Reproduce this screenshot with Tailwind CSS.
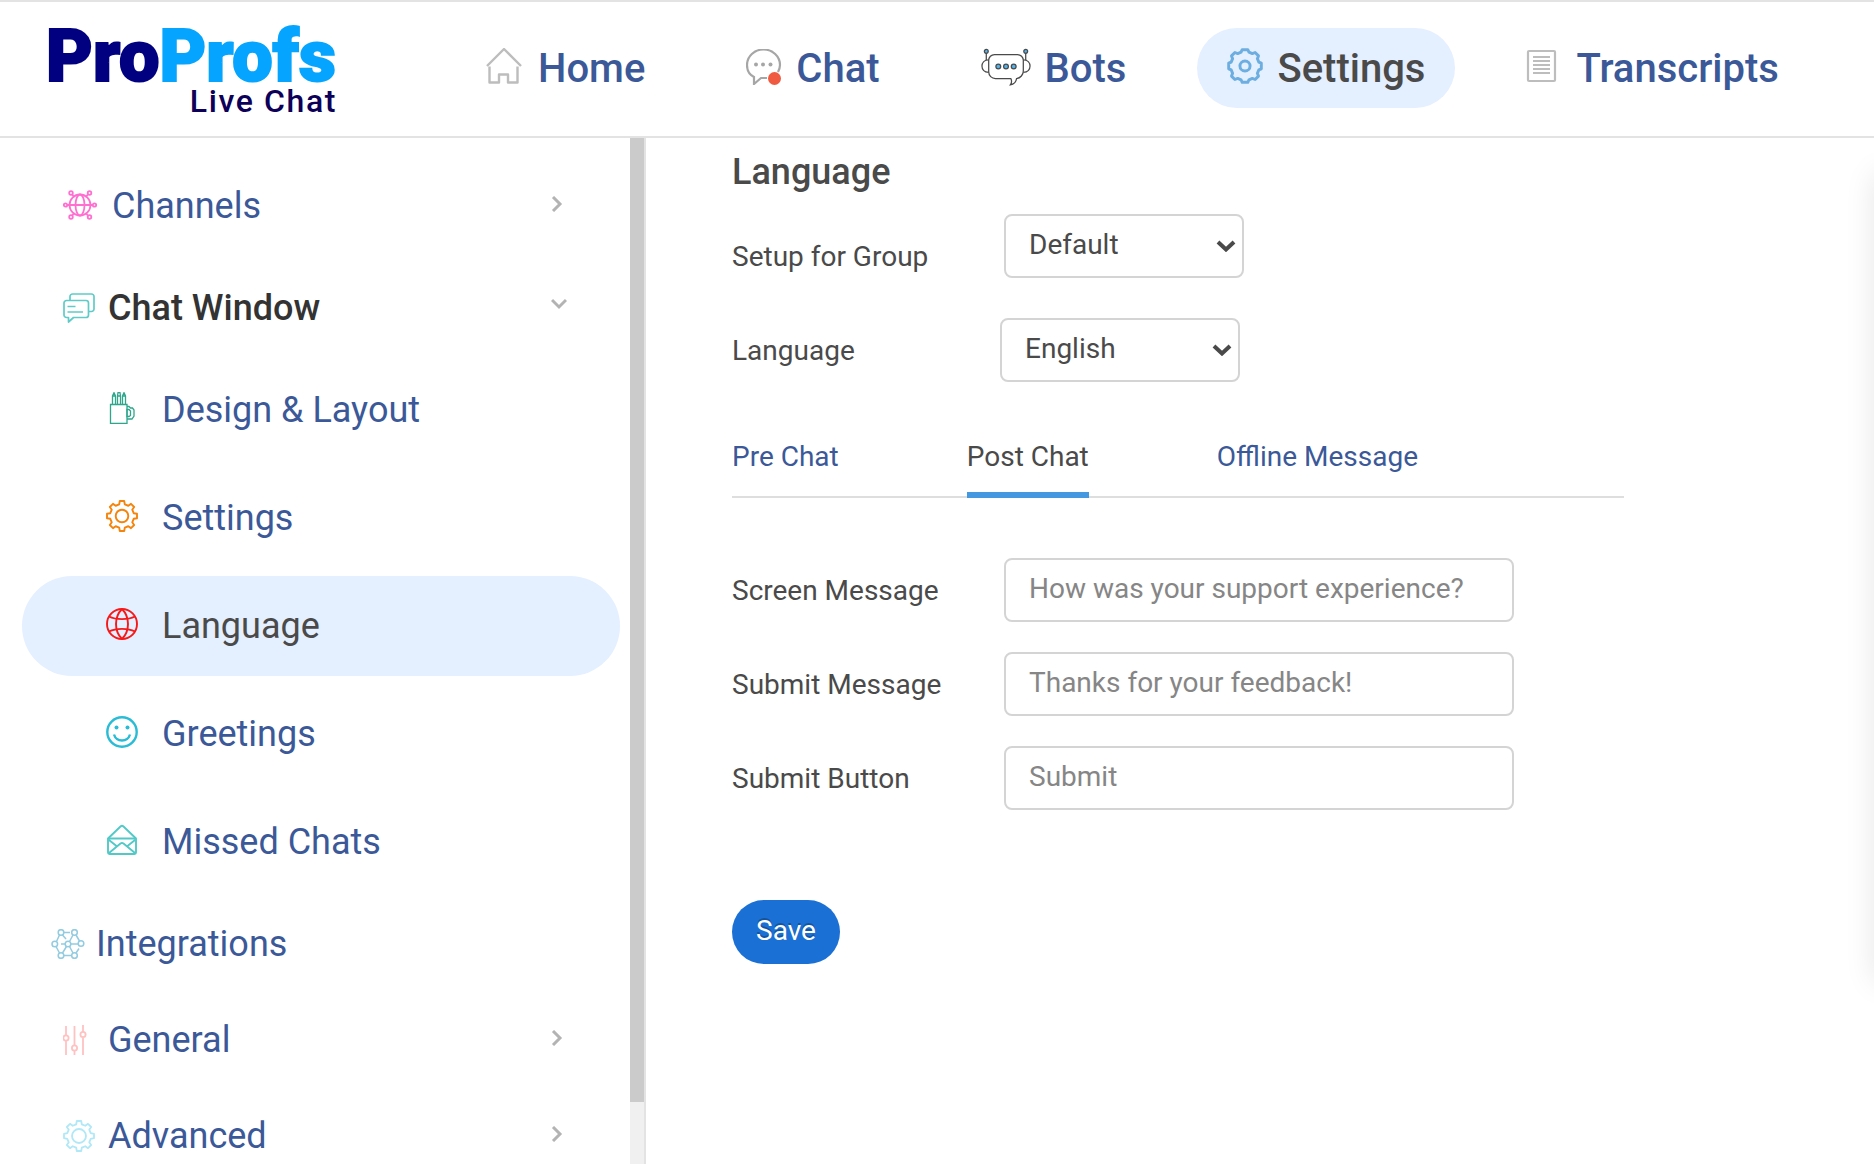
<!DOCTYPE html>
<html lang="en">
<head>
    <meta charset="UTF-8">
    <meta name="viewport" content="width=device-width, initial-scale=1.0">
    <title>ProProfs Live Chat - Language Settings</title>
    <script src="https://cdn.jsdelivr.net/npm/@tailwindcss/browser@4"></script>
</head>
<body class="h-screen flex flex-col overflow-hidden bg-white text-[#4a4a4a] font-['Roboto',sans-serif]">

    <!-- Shared icon shapes -->
    <svg class="hidden">
        <symbol id="gear" viewBox="0 0 32 32">
            <path d="M13.8 1H18.2L18.8 4.3L22.3 5.75L25 3.85L28.15 7L26.25 9.7L27.7 13.2L31 13.8V18.2L27.7 18.8L26.25 22.3L28.15 25L25 28.15L22.3 26.25L18.8 27.7L18.2 31H13.8L13.2 27.7L9.7 26.25L7 28.15L3.85 25L5.75 22.3L4.3 18.8L1 18.2V13.8L4.3 13.2L5.75 9.7L3.85 7L7 3.85L9.7 5.75L13.2 4.3Z" stroke-linejoin="round"/>
        </symbol>
        <symbol id="chevron-right" viewBox="0 0 16 16">
            <path d="M4 1L11 8L4 15"/>
        </symbol>
    </svg>

    <!-- Header -->
    <header class="shrink-0 h-[138px] flex items-start border-y-2 border-[#e3e3e3] pl-[46px]">
        <a href="#" class="mt-6 w-[294px] shrink-0 flex flex-col">
            <span class="font-black text-[72px] leading-[62px] text-[#000080] [-webkit-text-stroke-width:2px]">Pro<span class="text-[#05a5ff]">Profs</span></span>
            <span class="self-end pr-[3px] text-[32px] leading-[26px] font-medium tracking-wider text-[#0d0058]">Live Chat</span>
        </a>
        <nav class="ml-[116px] mt-[26px] flex gap-[41px] text-[40px] leading-[60px] font-medium text-[#3b5998]">
            <a href="#" class="flex items-center gap-4 h-20 px-[30px] pt-[2px] rounded-full">
                <svg class="w-9 h-9 mb-[6px]" viewBox="0 0 36 36" fill="none" stroke="#bdbdbd" stroke-width="2.400" stroke-linejoin="round">
                    <path d="M1 18L18 1L35 18"/>
                    <path d="M3.500 18.500V34.500H13V26.500H22V34.500H31.500V18.500"/>
                </svg>
                Home
            </a>
            <a href="#" class="flex items-center gap-[14px] h-20 px-[30px] pt-[2px] rounded-full">
                <svg class="w-9 h-9 mb-1" viewBox="0 0 36 36" fill="none">
                    <path d="M21 29H15L8 35V28C4 26 1 21.500 1 16A16.500 15.500 0 0 1 34 16C34 19 33 21 32 23" stroke="#a6a6a6" stroke-width="2.200"/>
                    <g fill="#a6a6a6">
                        <circle cx="10" cy="15.500" r="2"/>
                        <circle cx="17" cy="15.500" r="2"/>
                        <circle cx="24.500" cy="15.500" r="2"/>
                    </g>
                    <circle cx="28.500" cy="29.500" r="6.500" fill="#f05a40"/>
                </svg>
                Chat
            </a>
            <a href="#" class="flex items-center gap-[14px] h-20 px-[30px] pt-[2px] rounded-full">
                <svg class="w-[50px] h-[38px] mb-1" viewBox="0 0 52 38" fill="none" stroke="#4a4a4a" stroke-width="1.300">
                    <path d="M14 6H38A6 6 0 0 1 44 12V23A8 8 0 0 1 37 31C36.500 34 34 37 30.500 37.500C32 35.500 32 33 31 31H15A7 7 0 0 1 8 24V12A6 6 0 0 1 14 6Z"/>
                    <path d="M8 11.500C3 11.500 1 15 1 18S3 24.500 8 24.500"/>
                    <path d="M44 11.500C49 11.500 51 15 51 18S49 24.500 44 24.500"/>
                    <path d="M5.500 12V4M46.500 12V4"/>
                    <g fill="#53b4ee">
                        <circle cx="5.500" cy="2.700" r="2"/>
                        <circle cx="46.500" cy="2.700" r="2"/>
                        <circle cx="18" cy="18.500" r="2.500"/>
                        <circle cx="26" cy="18.500" r="2.500"/>
                        <circle cx="34" cy="18.500" r="2.500"/>
                    </g>
                </svg>
                Bots
            </a>
            <a href="#" class="flex items-center gap-[14px] h-20 px-[30px] pt-[2px] rounded-full bg-[#e4efff] text-[#4a4a4a]" aria-current="page">
                <svg class="w-9 h-9 mb-[6px]" viewBox="0 0 32 32" fill="none" stroke="#6caee0" stroke-width="2.600">
                    <path d="M13.500 1.500H18.500L19.500 3.700L22.500 5L25 4L28 7L27 9.500L28.300 12.500L30.500 13.500V18.500L28.300 19.500L27 22.500L28 25L25 28L22.500 27L19.500 28.300L18.500 30.500H13.500L12.500 28.300L9.500 27L7 28L4 25L5 22.500L3.700 19.500L1.500 18.500V13.500L3.700 12.500L5 9.500L4 7L7 4L9.500 5L12.500 3.700Z" stroke-linejoin="round"/>
                    <circle cx="16" cy="16" r="4.500"/>
                </svg>
                Settings
            </a>
            <a href="#" class="flex items-center gap-[14px] h-20 px-[30px] pt-[2px] rounded-full">
                <svg class="w-9 h-9 mb-[6px]" viewBox="0 0 36 36" fill="none" stroke="#bdbdbd" stroke-width="2.200">
                    <rect x="2" y="3" width="27" height="30" rx="1"/>
                    <path d="M7 9H24M7 13H24M7 17H24M7 21H24M7 25H24" stroke-width="2"/>
                </svg>
                Transcripts
            </a>
        </nav>
    </header>

    <div class="flex flex-1 min-h-0">
        <!-- Left Sidebar -->
        <aside class="w-[646px] shrink-0 flex border-r-2 border-[#e3e3e3]">
            <nav class="flex-1 overflow-hidden pt-5 text-4xl text-[#3b5998]">
                <a href="#" class="flex items-center h-24 mb-[6px] pl-[63px] pr-[65px]">
                    <svg class="w-[34px] h-[30px] mb-[2px]" viewBox="0 0 34 30" fill="none" stroke="#ff6fd0" stroke-width="1.800">
                        <circle cx="17" cy="15" r="10.500"/>
                        <ellipse cx="17" cy="15" rx="4.500" ry="10.500"/>
                        <path d="M4.500 15H29.500M9.200 4.500L11 6.800M24.800 4.500L23 6.800M9.200 25.500L11 23.200M24.800 25.500L23 23.200"/>
                        <circle cx="2.500" cy="15" r="1.700"/>
                        <circle cx="31.500" cy="15" r="1.700"/>
                        <circle cx="8" cy="3" r="1.800"/>
                        <circle cx="26.500" cy="3" r="1.800"/>
                        <circle cx="8" cy="27" r="1.800"/>
                        <circle cx="26.500" cy="27" r="1.800"/>
                    </svg>
                    <span class="ml-[15px]">Channels</span>
                    <svg class="ml-auto mb-1 w-4 h-4" fill="none" stroke="#b3b3b3" stroke-width="3"><use href="#chevron-right"/></svg>
                </a>
                <a href="#" class="flex items-center h-24 pl-[63px] pr-[63px] font-medium text-[#333333]">
                    <svg class="w-8 h-[30px]" viewBox="0 0 32 30" fill="none" stroke="#5fcbc8" stroke-width="1.700" stroke-linejoin="round">
                        <path d="M3.500 7.500H23A2.500 2.500 0 0 1 25.500 10V22A2.500 2.500 0 0 1 23 24.500H10.500L5.500 29V24.500H3.500A2.500 2.500 0 0 1 1 22V10A2.500 2.500 0 0 1 3.500 7.500Z"/>
                        <path d="M7 7V3.500A2.500 2.500 0 0 1 9.500 1H28.500A2.500 2.500 0 0 1 31 3.500V16A2.500 2.500 0 0 1 28.500 18.500H26M4.500 13.500H12.500M4.500 19H20"/>
                    </svg>
                    <span class="ml-[13px]">Chat Window</span>
                    <svg class="ml-auto mb-2 w-4 h-4" viewBox="0 0 16 16" fill="none" stroke="#b3b3b3" stroke-width="3">
                        <path d="M1 4L8 11L15 4"/>
                    </svg>
                </a>

                <!-- Chat Window submenu -->
                <a href="#" class="flex items-center h-[100px] my-1 ml-[22px] mr-[10px] pl-[84px] rounded-full">
                    <svg class="w-8 h-8 mb-1" viewBox="0 0 32 32" fill="none" stroke="#2fa58c" stroke-width="1.300">
                        <path d="M4.500 12.500H21V31.500H4.500Z"/>
                        <path d="M21 14.500H23L24.500 16H26.500L28 18V24L26 27H21"/>
                        <path d="M21 17.500H23L24.500 19V23.500L23 24.500H21Z"/>
                        <path d="M6.500 12V4L8 .7L9.500 4V12M11.500 12V4L12 .7H14L14.500 4V12M16.500 12V4L18 .7L19.500 4V12M6.500 4H9.500M11.500 4H14.500M16.500 4H19.500"/>
                    </svg>
                    <span class="ml-6">Design &amp; Layout</span>
                </a>
                <a href="#" class="flex items-center h-[100px] mt-2 mb-1 ml-[22px] mr-[10px] pl-[84px] rounded-full">
                    <svg class="w-8 h-8 mb-1" viewBox="0 0 32 32" fill="none" stroke="#f5840c" stroke-width="1.900">
                        <use href="#gear"/>
                        <circle cx="16" cy="16" r="6.300"/>
                    </svg>
                    <span class="ml-6">Settings</span>
                </a>
                <a href="#" class="flex items-center h-[100px] mt-2 mb-1 ml-[22px] mr-[10px] pl-[84px] rounded-full bg-[#e4efff] text-[#4a4a4a]" aria-current="page">
                    <svg class="w-8 h-8 mb-1" viewBox="0 0 32 32" fill="none" stroke="#f71818" stroke-width="1.900">
                        <circle cx="16" cy="16" r="15"/>
                        <path d="M16 1C8 9 8 23 16 31M16 1C24 9 24 23 16 31"/>
                        <path d="M3 8.500C10 12 22 12 29 8.500M3 23.500C10 20 22 20 29 23.500"/>
                    </svg>
                    <span class="ml-6">Language</span>
                </a>
                <a href="#" class="flex items-center h-[100px] mt-2 mb-1 ml-[22px] mr-[10px] pl-[84px] rounded-full">
                    <svg class="w-8 h-8 mb-1" viewBox="0 0 32 32" fill="none" stroke="#29bcd6" stroke-width="2.400">
                        <circle cx="16" cy="16" r="14.700"/>
                        <path d="M8 18.500C10.500 26.500 21.500 26.500 24 18.500"/>
                        <circle cx="10.500" cy="11.500" r="2" fill="#29bcd6" stroke="none"/>
                        <circle cx="21.500" cy="11.500" r="2" fill="#29bcd6" stroke="none"/>
                    </svg>
                    <span class="ml-6">Greetings</span>
                </a>
                <a href="#" class="flex items-center h-[100px] mt-2 mb-1 ml-[22px] mr-[10px] pl-[84px] rounded-full">
                    <svg class="w-8 h-8 mb-1" viewBox="0 0 32 32" fill="none" stroke="#52c9c7" stroke-width="1.900" stroke-linejoin="round">
                        <path d="M2 14.500L14.500 2.500Q16 1.200 17.500 2.500L30 14.500V28.500A1.500 1.500 0 0 1 28.500 30H3.500A1.500 1.500 0 0 1 2 28.500Z"/>
                        <path d="M3 14.500H29M3 16L10.500 22M29 16L21.500 22M3 29L14.500 19.500Q16 18.500 17.500 19.500L29 29"/>
                    </svg>
                    <span class="ml-6">Missed Chats</span>
                </a>

                <a href="#" class="flex items-center h-24 pl-[51px] pr-[65px]">
                    <svg class="w-[34px] h-[30px]" viewBox="0 0 34 30" fill="none" stroke="#93cbe0" stroke-width="1.500">
                        <circle cx="10" cy="3.500" r="2.800"/>
                        <circle cx="23.500" cy="3.500" r="2.800"/>
                        <circle cx="3.800" cy="15" r="2.800"/>
                        <circle cx="17" cy="15" r="2.800"/>
                        <circle cx="30" cy="14.500" r="2.800"/>
                        <circle cx="10" cy="26.500" r="2.800"/>
                        <circle cx="23.500" cy="26.500" r="2.800"/>
                        <path d="M13 3.500H19M25 6L28.500 12M8.500 6L5.500 12.500M11.500 6L15 10M22 6L18.500 12.500M10 15H14M20 15H27M5 17.500L8.500 24M15.500 17.500L11.500 24M18.500 17.500L22 24M13 26.500H20.500M28 19.500L25 24"/>
                    </svg>
                    <span class="ml-[11px]">Integrations</span>
                </a>
                <a href="#" class="flex items-center h-24 pl-[63px] pr-[65px]">
                    <svg class="w-8 h-[30px]" viewBox="0 0 32 30" fill="none" stroke="#ffc2c2" stroke-width="1.800">
                        <path d="M3 1V10M3 16V30M11.500 1V20M11.500 26V30M20 0V7M20 13V30"/>
                        <circle cx="3" cy="13" r="2.600"/>
                        <circle cx="11.500" cy="23" r="2.600"/>
                        <circle cx="20" cy="9.500" r="2.600"/>
                    </svg>
                    <span class="ml-[13px]">General</span>
                    <svg class="ml-auto mb-1 w-4 h-4" fill="none" stroke="#b3b3b3" stroke-width="3"><use href="#chevron-right"/></svg>
                </a>
                <a href="#" class="flex items-center h-24 pl-[63px] pr-[65px]">
                    <svg class="w-8 h-8" viewBox="0 0 32 32" fill="none" stroke="#b0e8f7" stroke-width="1.800">
                        <use href="#gear"/>
                        <circle cx="16" cy="16" r="7"/>
                    </svg>
                    <span class="ml-[13px]">Advanced</span>
                    <svg class="ml-auto mb-1 w-4 h-4" fill="none" stroke="#b3b3b3" stroke-width="3"><use href="#chevron-right"/></svg>
                </a>
            </nav>
            <!-- Scrollbar -->
            <div class="w-[14px] shrink-0 bg-[#f0f0f0]">
                <div class="h-[94%] bg-[#cbcbcb]"></div>
            </div>
        </aside>

        <!-- Main Content -->
        <main class="flex-1 min-w-0 overflow-hidden pl-[86px] pr-6 text-[28px] leading-[36px]">
            <h1 class="pt-3 text-4xl leading-[44px] font-medium">Language</h1>

            <form>
                <div class="mt-5 flex items-center">
                    <label for="group" class="w-[272px] pt-[22px]">Setup for Group</label>
                    <div class="relative w-60">
                        <select id="group" class="w-full h-16 pl-[23px] pb-[2px] appearance-none bg-white border-2 border-[#d4d4d4] rounded-lg">
                            <option>Default</option>
                        </select>
                        <svg class="absolute right-2 top-[26px] w-5 h-3 pointer-events-none" viewBox="0 0 20 12" fill="none" stroke="#4a4a4a" stroke-width="4">
                            <path d="M2 2L10 9.500L18 2"/>
                        </svg>
                    </div>
                </div>
                <div class="mt-10 flex items-center">
                    <label for="language" class="w-[268px] pt-[2px]">Language</label>
                    <div class="relative w-60">
                        <select id="language" class="w-full h-16 pl-[23px] pb-[2px] appearance-none bg-white border-2 border-[#d4d4d4] rounded-lg">
                            <option>English</option>
                        </select>
                        <svg class="absolute right-2 top-[26px] w-5 h-3 pointer-events-none" viewBox="0 0 20 12" fill="none" stroke="#4a4a4a" stroke-width="4">
                            <path d="M2 2L10 9.500L18 2"/>
                        </svg>
                    </div>
                </div>

                <!-- Tabs -->
                <div class="mt-[57px] max-w-[892px] flex gap-32 border-b-2 border-[#dedede] text-[#3b5998]">
                    <a href="#" class="h-[59px] -mb-[2px]">Pre Chat</a>
                    <a href="#" class="h-[59px] -mb-[2px] border-b-6 border-[#4398e0] text-[#4a4a4a]">Post Chat</a>
                    <a href="#" class="h-[59px] -mb-[2px]">Offline Message</a>
                </div>

                <div class="mt-[60px] flex flex-col gap-[30px]">
                    <div class="flex items-center">
                        <label for="screen-message" class="w-[272px] pt-[2px]">Screen Message</label>
                        <input id="screen-message" type="text" value="How was your support experience?" class="w-[510px] h-16 px-[23px] pb-1 border-2 border-[#d4d4d4] rounded-lg text-[#868686]">
                    </div>
                    <div class="flex items-center">
                        <label for="submit-message" class="w-[272px] pt-[2px]">Submit Message</label>
                        <input id="submit-message" type="text" value="Thanks for your feedback!" class="w-[510px] h-16 px-[23px] pb-1 border-2 border-[#d4d4d4] rounded-lg text-[#868686]">
                    </div>
                    <div class="flex items-center">
                        <label for="submit-button" class="w-[272px] pt-[2px]">Submit Button</label>
                        <input id="submit-button" type="text" value="Submit" class="w-[510px] h-16 px-[23px] pb-1 border-2 border-[#d4d4d4] rounded-lg text-[#868686]">
                    </div>
                </div>

                <button type="button" class="mt-[90px] h-16 px-6 pb-[2px] rounded-full bg-[#1a70d4] text-white text-shadow-[0_-2px_0_rgb(0_0_0/0.25)]">Save</button>
            </form>
        </main>
    </div>

    <!-- Closed drawer, only its shadow shows at the window edge -->
    <div class="fixed left-full top-[174px] bottom-[182px] w-10 shadow-[0_0_30px_rgba(0,0,0,0.1)]"></div>
</body>
</html>
